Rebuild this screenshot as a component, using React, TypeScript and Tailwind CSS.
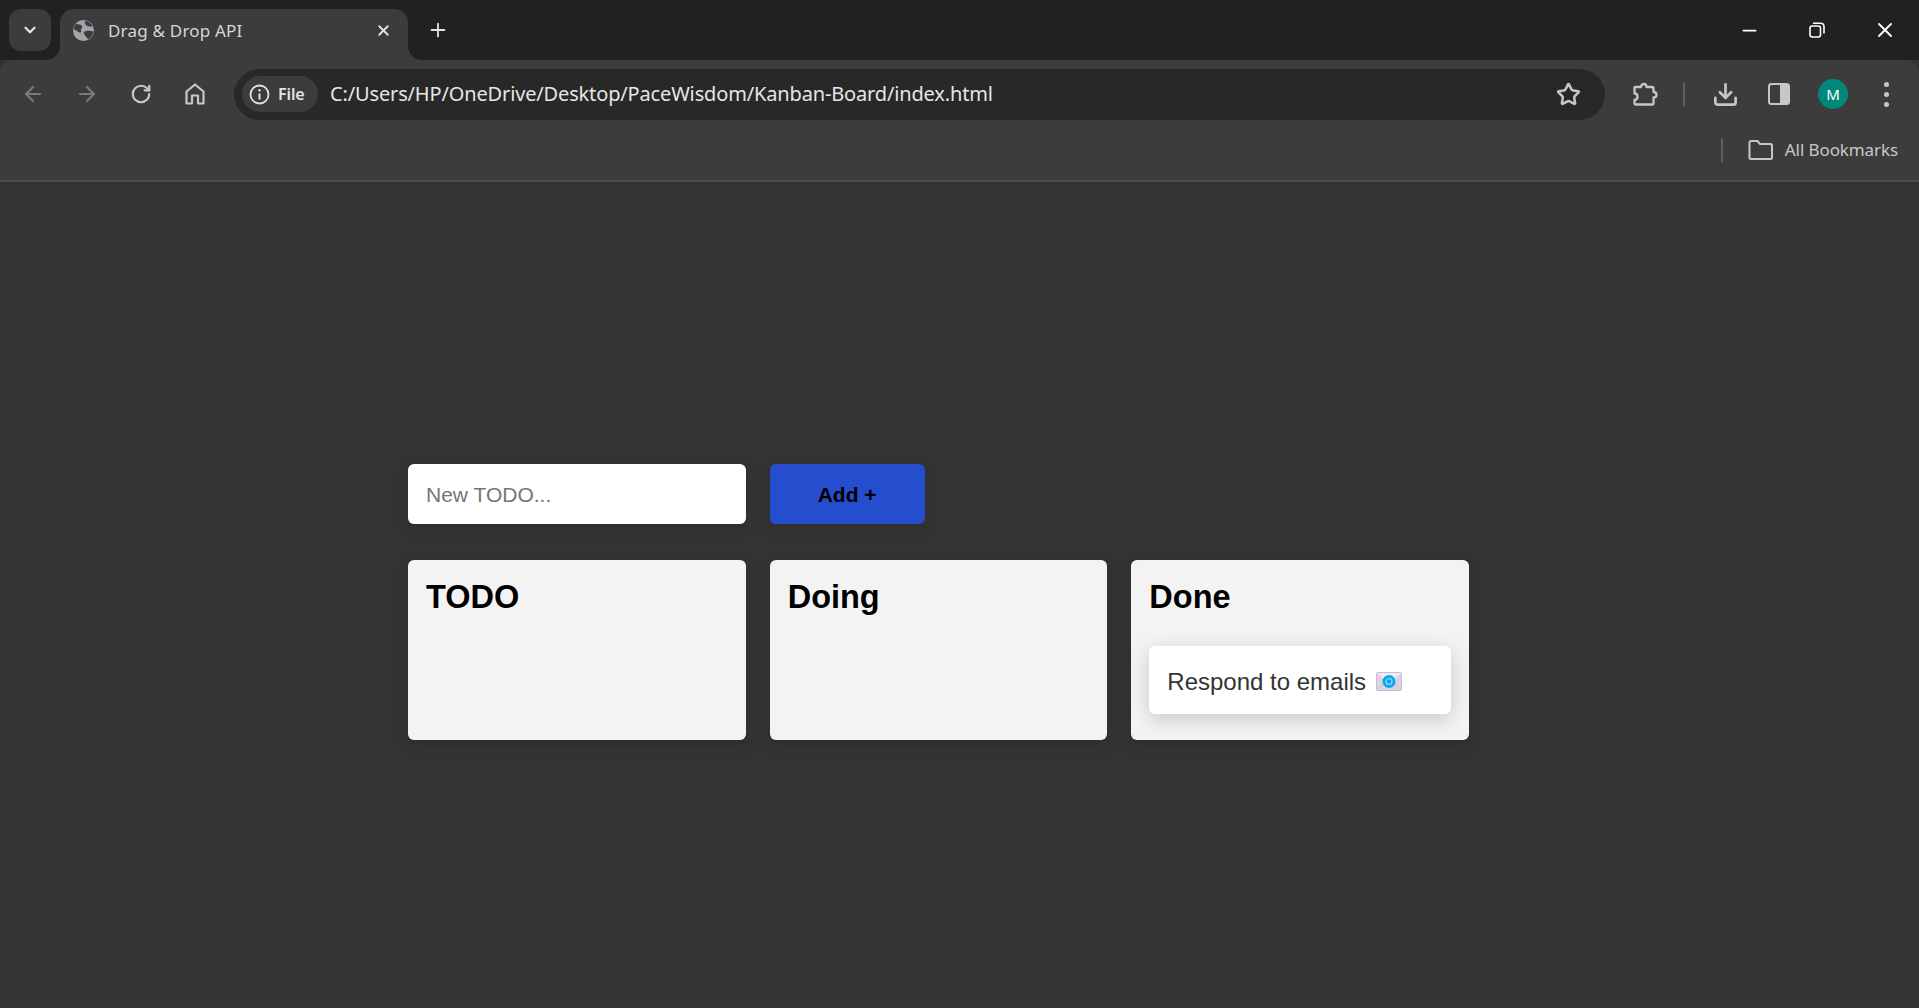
import { ArrowLeft, ArrowRight, RotateCw, Star, Download, Plus, X, ChevronDown, Minus } from "lucide-react";

const ui = "font-['Noto_Sans','Open_Sans',sans-serif]";

function Globe() {
  return (
    <svg width="21" height="21" viewBox="0 0 21 21" className="shrink-0">
      <circle cx="10.5" cy="10.5" r="10.5" fill="#a0a5ad" />
      <path d="M3 3.5 C6 5 8 4 9 6 C10 8 7 9 8 11 C9 13 6 13 4.5 11.5 C3 10 1.5 10 .8 9 C1 7 2 5 3 3.5Z M12 1 C15 1 18 3 19.5 6 C17.5 7 15 6.5 13.5 5.5 C12 4.5 11.5 2.5 12 1Z M11 12 C13 10.5 17 10.5 20.5 11.5 C20 15 18 18 15 19.5 C14.5 17.5 13 17 12 15.5 C11.5 14.5 10.5 13 11 12Z" fill="#3c3c3c" />
    </svg>
  );
}

function HomeIcon() {
  return (
    <svg width="20" height="22" viewBox="0 0 20 22" fill="none" stroke="#c7c7c7" strokeWidth="2.2">
      <path d="M1.5 20.5 V8.5 L10 1.5 L18.5 8.5 V20.5 H13 V12.5 H7 V20.5 Z" strokeLinejoin="round" />
    </svg>
  );
}

function InfoIcon() {
  return (
    <svg width="21" height="21" viewBox="0 0 21 21" fill="none" stroke="#e3e3e3" strokeWidth="1.8">
      <circle cx="10.5" cy="10.5" r="9" />
      <path d="M10.5 9.5 V15.5" strokeWidth="2" />
      <circle cx="10.5" cy="6.3" r="1.2" fill="#e3e3e3" stroke="none" />
    </svg>
  );
}

function Puzzle() {
  return (
    <svg width="26" height="26" viewBox="0 0 26 26" fill="none" stroke="#c7c7c7" strokeWidth="2.3" strokeLinejoin="round">
      <path d="M3 6 H9 C9 2 14.5 2 14.5 6 H20 C21 6 21.5 6.5 21.5 7.5 V11 C25.5 11 25.5 16.5 21.5 16.5 V22 C21.5 23 21 23.5 20 23.5 H4 C3 23.5 2.5 23 2.5 22 V19 C6.5 19 6.5 12.5 2.5 12.5 V6.5 C2.5 6.2 2.7 6 3 6Z" />
    </svg>
  );
}

function SidePanel() {
  return (
    <svg width="22" height="22" viewBox="0 0 22 22" fill="none">
      <rect x="1" y="1" width="20" height="20" rx="2.5" stroke="#c7c7c7" strokeWidth="2" />
      <path d="M12 1 H18.5 C20 1 21 2 21 3.5 V18.5 C21 20 20 21 18.5 21 H12 Z" fill="#c7c7c7" />
    </svg>
  );
}

function Restore() {
  return (
    <svg width="16" height="16" viewBox="0 0 16 16" fill="none" stroke="#ffffff" strokeWidth="1.6">
      <rect x="1" y="4" width="10.5" height="11" rx="2.2" />
      <path d="M4 1.2 H11.5 C13.5 1.2 15 2.7 15 4.7 V11.5" />
    </svg>
  );
}

function FolderIcon() {
  return (
    <svg width="25" height="20" viewBox="0 0 25 20" fill="none" stroke="#c7c7c7" strokeWidth="2" strokeLinejoin="round">
      <path d="M1.5 2.5 C1.5 1.6 2.1 1 3 1 H9.5 L12 4 H22.5 C23.4 4 24 4.6 24 5.5 V17.5 C24 18.4 23.4 19 22.5 19 H3 C2.1 19 1.5 18.4 1.5 17.5 Z" />
    </svg>
  );
}

function EnvelopeEmoji() {
  return (
    <svg width="26" height="19" viewBox="0 0 26 19" className="shrink-0">
      <rect x=".5" y=".5" width="25" height="18" rx="1.5" fill="#ddd3e2" stroke="#c6bccf" />
      <path d="M1 1 L13 11 L25 1 Z" fill="#f0ebf3" />
      <path d="M1 18 L10 9 M25 18 L16 9" stroke="#c9bdd2" strokeWidth="1" />
      <circle cx="13" cy="9.5" r="6.5" fill="#08a6ee" />
      <circle cx="13" cy="9.5" r="3" fill="none" stroke="#9fd9f5" strokeWidth="1.2" />
    </svg>
  );
}

function Corner({ side }: { side: "left" | "right" }) {
  return (
    <svg
      width="14"
      height="14"
      viewBox="0 0 14 14"
      className={side === "left" ? "absolute bottom-0 left-[-14px]" : "absolute bottom-0 right-[-14px]"}
    >
      <path d={side === "left" ? "M14 0 V14 H0 C8 14 14 8 14 0Z" : "M0 0 V14 H14 C6 14 0 8 0 0Z"} fill="#3c3c3c" />
    </svg>
  );
}

function Column({ title, children }: { title: string; children?: React.ReactNode }) {
  return (
    <section className="h-[180px] rounded-md bg-[#f3f3f3] p-[18px] shadow-[0_5px_12px_rgba(0,0,0,0.12)]">
      <h2 className="text-[32.5px] leading-[38px] font-bold text-black">{title}</h2>
      {children}
    </section>
  );
}

export default function App() {
  return (
    <div className="flex h-[1008px] w-[1919px] flex-col overflow-hidden bg-[#333333] font-['Liberation_Sans',Arial,sans-serif]">
      {/* tab strip */}
      <header className={`flex h-[60px] shrink-0 bg-[#202221] ${ui}`}>
        <div className="ml-[9px] mt-[9px] flex h-[42px] w-[42px] items-center justify-center rounded-[12px] bg-[#3c3c3c]">
          <ChevronDown size={18} color="#e3e3e3" strokeWidth={3} />
        </div>
        <div className="relative ml-[9px] mt-[9px] flex h-[51px] w-[348px] items-center rounded-t-[14px] bg-[#3c3c3c] pb-[9px] pl-[13px] pr-[16px]">
          <Corner side="left" />
          <Corner side="right" />
          <Globe />
          <span className="ml-[14px] mt-px flex-1 text-[17px] text-[#d6d6d6] tracking-[0.2px]">Drag &amp; Drop API</span>
          <X size={17} color="#e3e3e3" strokeWidth={2.6} />
        </div>
        <div className="ml-[19px] flex w-[22px] items-center justify-center">
          <Plus size={22} color="#e3e3e3" strokeWidth={2} />
        </div>
        <div className="ml-auto flex">
          <div className="flex w-[68px] items-center justify-center"><Minus size={21} color="#ffffff" strokeWidth={2} /></div>
          <div className="flex w-[68px] items-center justify-center"><Restore /></div>
          <div className="flex w-[68px] items-center justify-center"><X size={24} color="#ffffff" strokeWidth={1.9} /></div>
        </div>
      </header>

      {/* toolbar + bookmarks */}
      <div className={`relative h-[122px] shrink-0 rounded-t-[14px] border-b-2 border-[#4b4b4b] bg-[#3c3c3c] ${ui}`}>
        <div className="flex h-[68px] items-center pl-[6px] pr-[5px]">
          <div className="flex w-[54px] justify-center"><ArrowLeft size={24} color="#7a7a7a" strokeWidth={2.2} /></div>
          <div className="flex w-[54px] justify-center"><ArrowRight size={24} color="#7a7a7a" strokeWidth={2.2} /></div>
          <div className="flex w-[54px] justify-center"><RotateCw size={22} color="#c7c7c7" strokeWidth={2.4} /></div>
          <div className="flex w-[54px] justify-center"><HomeIcon /></div>
          <div className="ml-[12px] flex h-[51px] w-[1371px] items-center rounded-full bg-[#282828] pl-[8px] pr-[24px]">
            <div className="flex h-[36px] w-[76px] items-center gap-[8px] rounded-full bg-[#3c3c3c] pl-[7px]">
              <InfoIcon />
              <span className="text-[16px] font-semibold text-[#e3e3e3] tracking-[-0.1px]">File</span>
            </div>
            <span className="ml-[12px] flex-1 text-[20px] text-[#e6e6e6] tracking-[-0.15px]">C:/Users/HP/OneDrive/Desktop/PaceWisdom/Kanban-Board/index.html</span>
            <Star size={25} color="#c7c7c7" strokeWidth={2.4} />
          </div>
          <div className="ml-[27px] flex w-[26px] justify-center"><Puzzle /></div>
          <div className="ml-[25px] h-[23px] w-[2px] bg-[#5f5f5f]" />
          <div className="ml-[23px] flex w-[34px] justify-center"><Download size={27} color="#c7c7c7" strokeWidth={2.4} /></div>
          <div className="ml-[20px] flex w-[34px] justify-center"><SidePanel /></div>
          <div className="ml-[22px] flex h-[30px] w-[30px] items-center justify-center rounded-full bg-[#00897b] text-[15px] text-white">M</div>
          <div className="ml-[36px] flex flex-col gap-[5px]">
            <span className="h-[5px] w-[5px] rounded-full bg-[#c7c7c7]" />
            <span className="h-[5px] w-[5px] rounded-full bg-[#c7c7c7]" />
            <span className="h-[5px] w-[5px] rounded-full bg-[#c7c7c7]" />
          </div>
        </div>
        <div className="flex h-[44px] items-center justify-end pr-[21px]">
          <div className="h-[24px] w-[2px] bg-[#5f5f5f]" />
          <div className="ml-[25px]"><FolderIcon /></div>
          <span className="ml-[12px] text-[17px] text-[#c7c7c7] tracking-[-0.1px]">All Bookmarks</span>
        </div>
      </div>

      {/* page */}
      <main className="flex-1 pl-[408px] pt-[282px]">
        <div className="grid w-[1061px] grid-cols-3 gap-x-6 gap-y-9">
          <input
            placeholder="New TODO..."
            className="h-[60px] rounded-md bg-white px-[18px] pt-px text-[21px] text-black shadow-[0_5px_12px_rgba(0,0,0,0.1)] outline-none placeholder:text-[#757575]"
          />
          <div className="col-span-2">
            <button className="h-[60px] w-[155px] rounded-md bg-[#254ecf] pt-px text-[21px] font-bold text-black shadow-[0_5px_12px_rgba(0,0,0,0.1)]">
              Add +
            </button>
          </div>
          <Column title="TODO" />
          <Column title="Doing" />
          <Column title="Done">
            <div className="mt-[30px] flex h-[68px] items-center gap-[10px] rounded-md bg-white px-[18px] pt-[3px] text-[24px] text-[#333333] shadow-[0_5px_20px_rgba(0,0,0,0.18)]">
              <span>Respond to emails</span>
              <EnvelopeEmoji />
            </div>
          </Column>
        </div>
      </main>
    </div>
  );
}
